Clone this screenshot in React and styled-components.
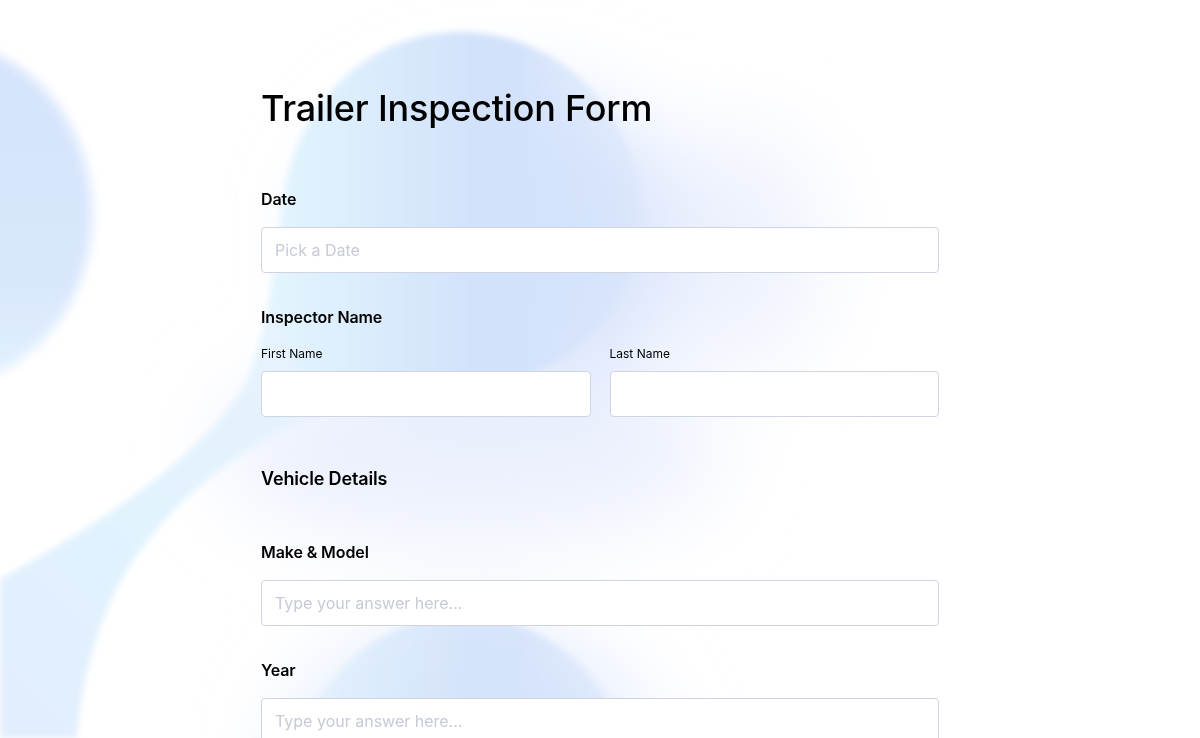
import React from 'react';
import styled, { createGlobalStyle } from 'styled-components';

const GlobalStyle = createGlobalStyle`
  html, body {
    margin: 0;
    padding: 0;
    background: #ffffff;
  }
  body {
    font-family: Inter, "Noto Sans", sans-serif;
    color: #000;
  }
  * {
    box-sizing: border-box;
  }
`;

const Page = styled.div`
  position: relative;
  min-height: 738px;
  overflow: hidden;
`;

const Backdrop = styled.svg`
  position: absolute;
  top: 0;
  left: 0;
  width: 1200px;
  height: 738px;
  z-index: 0;
  pointer-events: none;
`;

const Form = styled.form`
  position: relative;
  z-index: 1;
  width: 678px;
  margin: 0 auto;
  padding-top: 85px;
`;

const Title = styled.h1`
  margin: 0 0 58px;
  font-size: 36px;
  line-height: 46px;
  font-weight: 500;
  letter-spacing: -0.2px;
`;

const Field = styled.div`
  margin-bottom: 34px;
`;

const Label = styled.label`
  display: block;
  font-size: 16px;
  line-height: 20px;
  font-weight: 600;
  letter-spacing: -0.1px;
  margin-bottom: 18px;
`;

const SectionHeading = styled.h2`
  margin: 50px 0 51px;
  font-size: 18px;
  line-height: 24px;
  font-weight: 600;
  letter-spacing: -0.15px;
`;

const Row = styled.div`
  display: grid;
  grid-template-columns: 1fr 1fr;
  gap: 19px;
`;

const SubLabel = styled.label`
  display: block;
  font-size: 12px;
  line-height: 16px;
  font-weight: 400;
  margin: 1px 0 9px;
`;

const Input = styled.input`
  display: block;
  width: 100%;
  height: 46px;
  padding: 0 13px;
  border: 1px solid #cfd3e2;
  border-radius: 4px;
  background: #fff;
  font-family: inherit;
  font-size: 16px;
  color: #000;
  outline: none;

  &::placeholder {
    color: #c6cbd8;
  }
`;

const Background = () => (
  <Backdrop viewBox="0 0 1200 738">
    <defs>
      <linearGradient id="blobFill" gradientUnits="userSpaceOnUse" x1="270" y1="0" x2="470" y2="0">
        <stop offset="0" stopColor="#e3f5fe" />
        <stop offset="1" stopColor="#d3e2fb" />
      </linearGradient>
      <linearGradient id="bandFill" gradientUnits="userSpaceOnUse" x1="300" y1="400" x2="0" y2="700">
        <stop offset="0" stopColor="#e6f2fd" />
        <stop offset="0.5" stopColor="#e1f3fe" />
        <stop offset="1" stopColor="#e2eefd" />
      </linearGradient>
      <linearGradient id="leftFill" gradientUnits="userSpaceOnUse" x1="0" y1="60" x2="0" y2="380">
        <stop offset="0" stopColor="#d6e4fc" />
        <stop offset="0.7" stopColor="#d9e7fc" />
        <stop offset="1" stopColor="#e2f1fe" />
      </linearGradient>
      <linearGradient id="fadeMaskGrad" gradientUnits="userSpaceOnUse" x1="520" y1="0" x2="700" y2="0">
        <stop offset="0" stopColor="#fff" />
        <stop offset="1" stopColor="#000" />
      </linearGradient>
      <mask id="fadeRight" maskUnits="userSpaceOnUse" x="0" y="0" width="1200" height="738">
        <rect width="1200" height="738" fill="url(#fadeMaskGrad)" />
      </mask>
      <filter id="edge" filterUnits="userSpaceOnUse" x="-200" y="-200" width="1600" height="1200">
        <feGaussianBlur stdDeviation="3" />
      </filter>
      <filter id="softEdge" filterUnits="userSpaceOnUse" x="-300" y="-200" width="800" height="900">
        <feGaussianBlur stdDeviation="6" />
      </filter>
      <filter id="haze" filterUnits="userSpaceOnUse" x="-300" y="-300" width="1800" height="1400">
        <feGaussianBlur stdDeviation="45" />
      </filter>
    </defs>

    <rect width="1200" height="738" fill="#ffffff" />

    <g filter="url(#haze)">
      <ellipse cx="510" cy="245" rx="185" ry="150" fill="#d8e4fc" />
      <ellipse cx="470" cy="450" rx="250" ry="90" fill="#ebf0fd" />
      <ellipse cx="470" cy="780" rx="180" ry="150" fill="#dde7fc" />
      <ellipse cx="740" cy="250" rx="80" ry="120" fill="#eef2fd" />
    </g>

    <ellipse cx="-60" cy="214" rx="152" ry="172" fill="url(#leftFill)" filter="url(#softEdge)" />

    <g filter="url(#edge)" mask="url(#fadeRight)">
      <path
        d="M460 32
           C 370 32, 300 100, 285 190
           C 275 250, 270 330, 245 385
           C 200 460, 90 530, 0 579
           L 0 738 L 77 738
           C 80 690, 95 620, 130 565
           C 180 490, 250 440, 321 414
           C 380 395, 430 395, 470 392
           C 560 380, 650 310, 640 200
           C 630 100, 550 32, 460 32 Z"
        fill="url(#blobFill)"
      />
      <path
        d="M270 300
           C 265 340, 262 360, 245 385
           C 200 460, 90 530, 0 579
           L 0 738 L 77 738
           C 80 690, 95 620, 130 565
           C 180 490, 250 440, 321 414
           C 300 380, 285 340, 270 300 Z"
        fill="url(#bandFill)"
      />
      <ellipse cx="463" cy="790" rx="168" ry="174" fill="url(#blobFill)" opacity="0.85" />
    </g>
  </Backdrop>
);

const App = () => {
  return (
    <Page>
      <GlobalStyle />
      <Background />
      <Form onSubmit={(e) => e.preventDefault()}>
        <Title>Trailer Inspection Form</Title>

        <Field>
          <Label htmlFor="date">Date</Label>
          <Input id="date" type="text" placeholder="Pick a Date" />
        </Field>

        <Field>
          <Label>Inspector Name</Label>
          <Row>
            <div>
              <SubLabel htmlFor="first">First Name</SubLabel>
              <Input id="first" type="text" />
            </div>
            <div>
              <SubLabel htmlFor="last">Last Name</SubLabel>
              <Input id="last" type="text" />
            </div>
          </Row>
        </Field>

        <SectionHeading>Vehicle Details</SectionHeading>

        <Field>
          <Label htmlFor="make">Make &amp; Model</Label>
          <Input id="make" type="text" placeholder="Type your answer here..." />
        </Field>

        <Field>
          <Label htmlFor="year">Year</Label>
          <Input id="year" type="text" placeholder="Type your answer here..." />
        </Field>
      </Form>
    </Page>
  );
};

export default App;
